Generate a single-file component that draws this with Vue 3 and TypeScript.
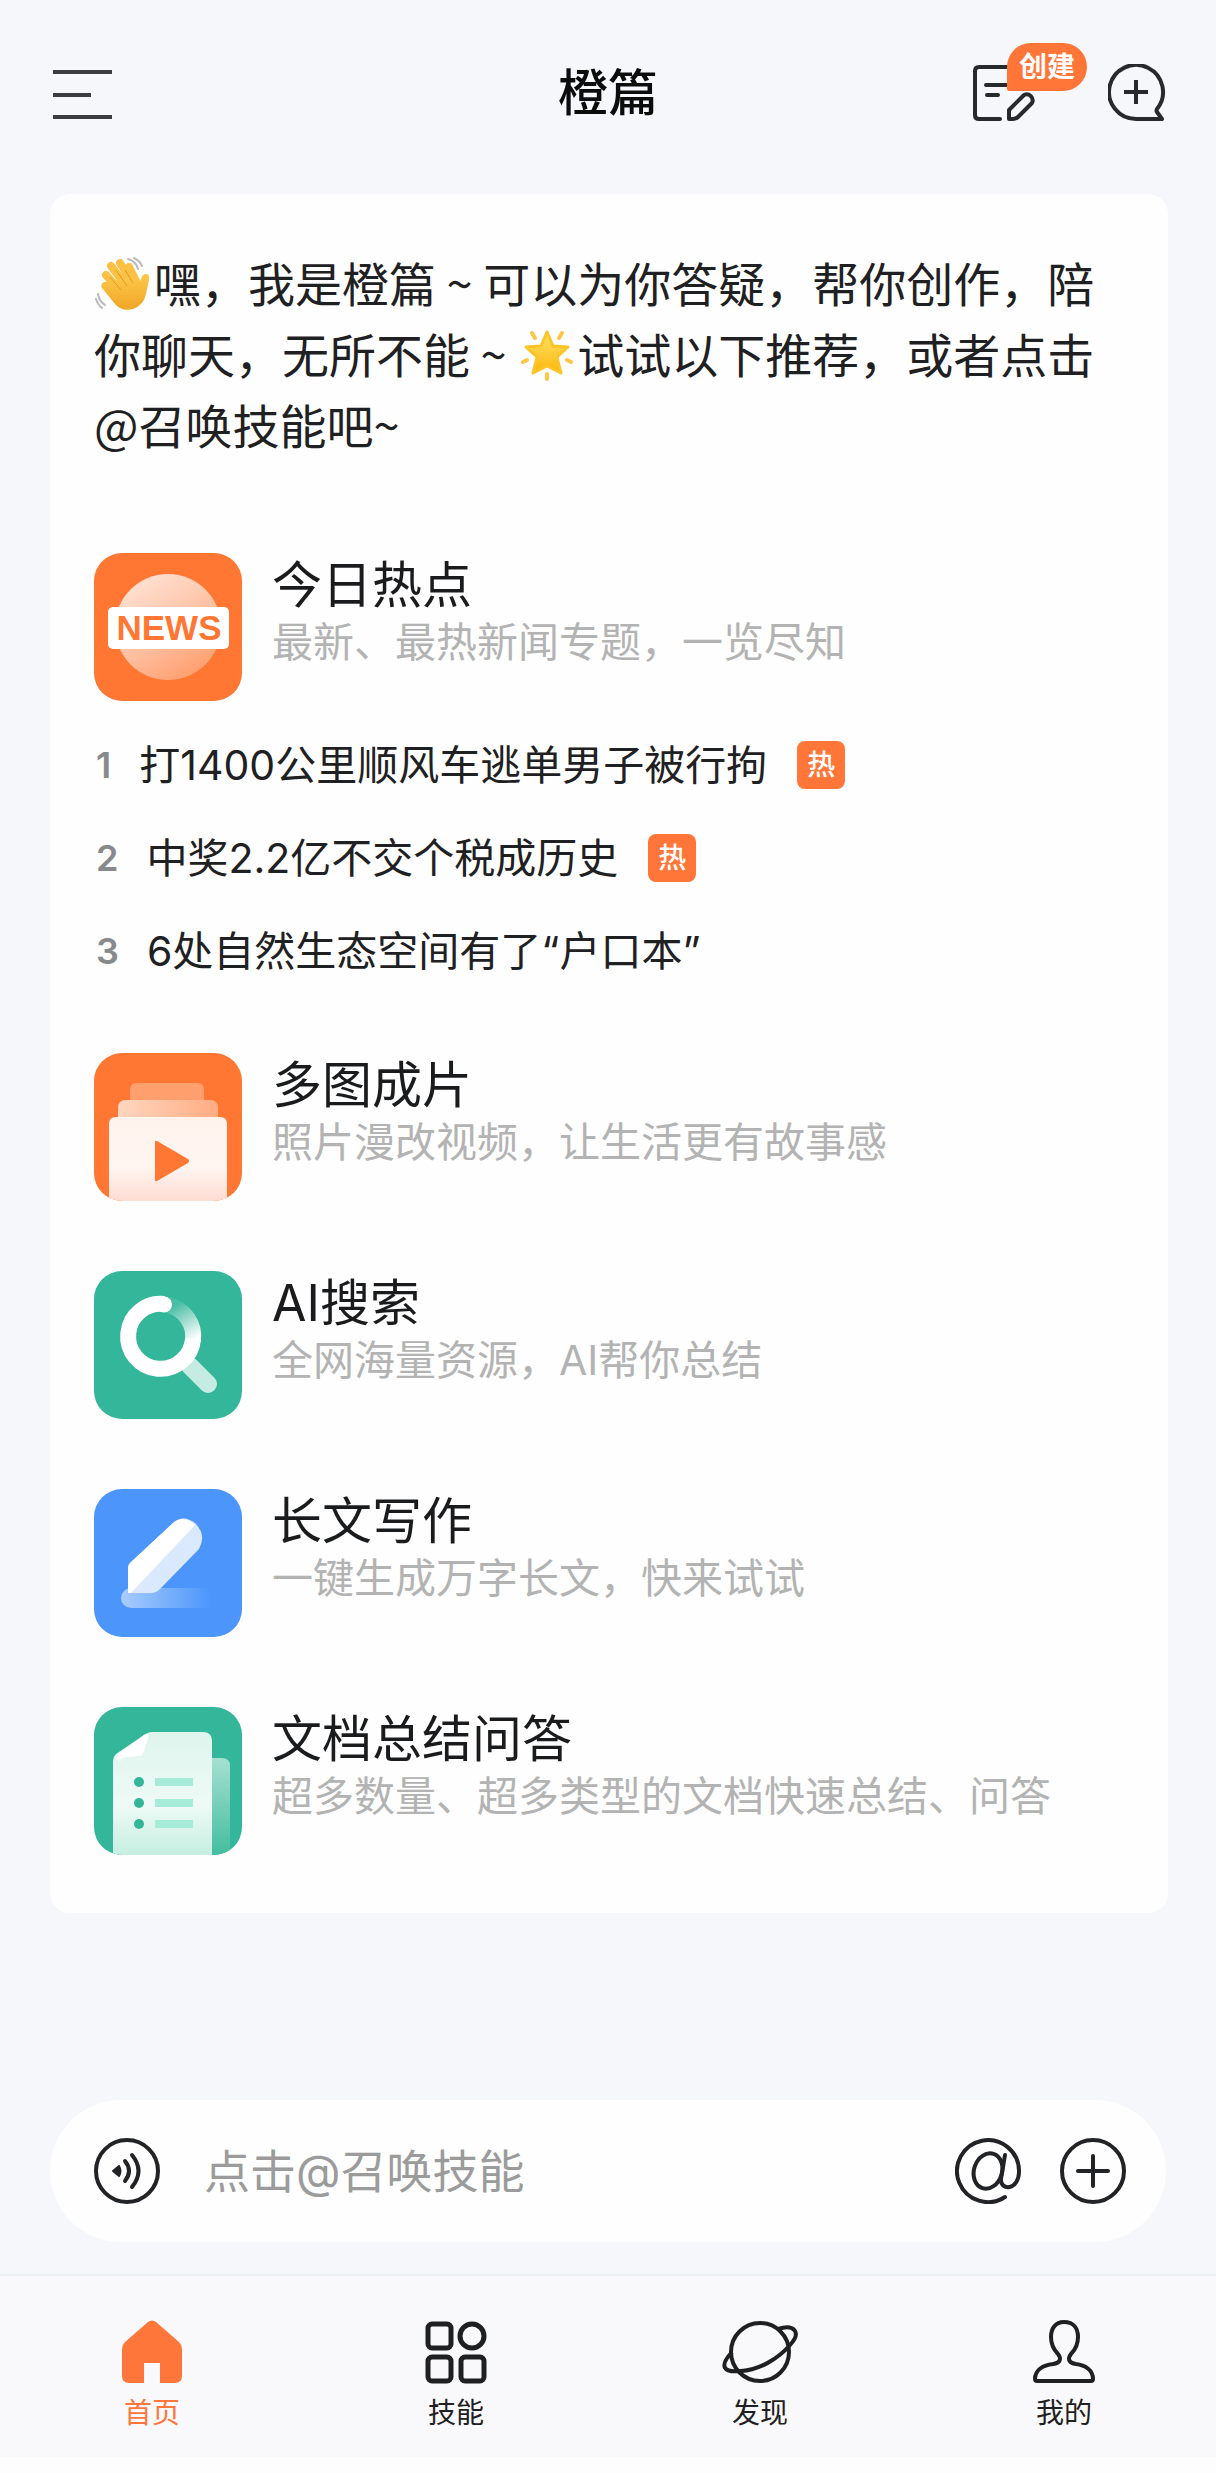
<script setup lang="ts">
import { ref } from 'vue'

interface Feature {
  id: string
  title: string
  desc: string
  color: string
}

interface NewsItem {
  text: string
  hot: boolean
}

interface Tab {
  id: string
  label: string
}

const news: NewsItem[] = [
  { text: '打1400公里顺风车逃单男子被行拘', hot: true },
  { text: '中奖2.2亿不交个税成历史', hot: true },
  { text: '6处自然生态空间有了“户口本”', hot: false },
]

const features: Feature[] = [
  { id: 'news', title: '今日热点', desc: '最新、最热新闻专题，一览尽知', color: '#ff7733' },
  { id: 'video', title: '多图成片', desc: '照片漫改视频，让生活更有故事感', color: '#ff7733' },
  { id: 'search', title: 'AI搜索', desc: '全网海量资源，AI帮你总结', color: '#33b699' },
  { id: 'write', title: '长文写作', desc: '一键生成万字长文，快来试试', color: '#4c96fb' },
  { id: 'doc', title: '文档总结问答', desc: '超多数量、超多类型的文档快速总结、问答', color: '#33b699' },
]

const tabs: Tab[] = [
  { id: 'home', label: '首页' },
  { id: 'skills', label: '技能' },
  { id: 'discover', label: '发现' },
  { id: 'me', label: '我的' },
]

const active = ref('home')
const message = ref('')
</script>

<template>
  <div class="app">
    <header class="topbar">
      <button class="icon-btn" type="button" aria-label="菜单">
        <svg width="62" height="58" viewBox="0 0 62 58" fill="none" stroke="#3c3d40" stroke-width="4">
          <path d="M3 8H62M3 31H41M3 53H62" />
        </svg>
      </button>
      <h1 class="title">橙篇</h1>
      <div class="actions">
        <button class="icon-btn create" type="button" aria-label="创建">
          <svg width="64" height="58" viewBox="0 0 64 58" fill="none" stroke="#28292c" stroke-width="4" stroke-linecap="round" stroke-linejoin="round">
            <path d="M36 3H7Q3 3 3 7V51Q3 55 7 55H28M14 21H36M15 31H26" />
            <path d="M37 55V46L52 31A6 6 0 0 1 60 39L46 53Q44 55 41 55Z" />
          </svg>
          <span class="badge">创建</span>
        </button>
        <button class="icon-btn" type="button" aria-label="新对话">
          <svg width="58" height="58" viewBox="0 0 58 58" fill="none" stroke="#28292c" stroke-width="4" stroke-linejoin="round">
            <path d="M28 55A27 27 0 1 1 49 45Q48 47 49 48L54 55ZM16 28H40M28 16V40" />
          </svg>
        </button>
      </div>
    </header>

    <main class="card">
      <p class="intro">
        <svg class="emoji" viewBox="0 0 58 54" role="img" aria-label="挥手">
          <defs>
            <linearGradient id="hand" x1="0" y1="0" x2="0" y2="1">
              <stop offset="0" stop-color="#fdc94b" />
              <stop offset="1" stop-color="#f0a526" />
            </linearGradient>
          </defs>
          <g stroke="#fbc044" stroke-width="8" stroke-linecap="round">
            <path d="M11 18L26 35M16 9L32 30M25 6L38 27M34 10L43 28" />
          </g>
          <path d="M9 25Q5 27 7 31L20 47Q27 55 38 52Q49 48 51 37L54 23Q55 17 51 17Q47 17 46 22L44 28L36 20L14 25Z" fill="url(#hand)" />
          <path d="M15 20L26 33M21 13L32 29M30 13L38 26" stroke="#e39a22" stroke-width="1" fill="none" />
          <path d="M33 2Q41 4 43 12M39 1Q45 4 47 9M3 37Q4 44 10 48M1 42Q3 48 7 51" stroke="#b9b9b9" stroke-width="2" stroke-linecap="round" fill="none" />
        </svg>嘿，我是橙篇 ~ 可以为你答疑，帮你创作，陪你聊天，无所不能 ~ <svg class="emoji" viewBox="0 0 58 54" role="img" aria-label="星星">
          <defs>
            <linearGradient id="star" x1="0" y1="0" x2="0" y2="1">
              <stop offset="0" stop-color="#ffe36a" />
              <stop offset="1" stop-color="#fbb60e" />
            </linearGradient>
          </defs>
          <path d="M29 4L35 18L50 19L39 29L43 45L29 38L15 45L19 29L8 19L23 18Z" fill="url(#star)" stroke="#fcc427" stroke-width="3" stroke-linejoin="round" />
          <g stroke="#fdc648" stroke-width="4" stroke-linecap="round">
            <path d="M14 5L17 10M44 5L41 10M5 34L9 32M53 34L49 32M29 46V51" />
          </g>
        </svg>试试以下推荐，或者点击@召唤技能吧~
      </p>

      <section v-for="f in features" :key="f.id" class="block">
        <a class="feature" href="#">
          <span class="tile" :style="{ background: f.color }">
            <svg v-if="f.id === 'news'" viewBox="0 0 148 148">
              <defs>
                <linearGradient id="globe" x1="0.2" y1="0" x2="0.8" y2="1">
                  <stop offset="0" stop-color="#ffe3d6" />
                  <stop offset="0.5" stop-color="#ffc3a6" />
                  <stop offset="1" stop-color="#ff9a68" />
                </linearGradient>
              </defs>
              <circle cx="74" cy="74" r="53" fill="url(#globe)" />
              <rect x="14" y="54" width="121" height="42" rx="5" fill="#fff" />
              <text x="75" y="87" text-anchor="middle" class="news-word">NEWS</text>
            </svg>
            <svg v-else-if="f.id === 'video'" viewBox="0 0 148 148">
              <defs>
                <linearGradient id="sheet" x1="0" y1="0" x2="0" y2="1">
                  <stop offset="0" stop-color="#fff3ec" />
                  <stop offset="0.6" stop-color="#fff5f1" />
                  <stop offset="1" stop-color="#ffdcd2" />
                </linearGradient>
                <linearGradient id="sheetMid" x1="0" y1="0" x2="1" y2="0">
                  <stop offset="0" stop-color="#ffd6c0" />
                  <stop offset="1" stop-color="#ffac82" />
                </linearGradient>
              </defs>
              <path d="M36 47V37Q36 30 43 30H103Q110 30 110 37V47Z" fill="#ff9f6e" />
              <path d="M24 66V55Q24 47 32 47H116Q124 47 124 55V66Z" fill="url(#sheetMid)" />
              <path d="M15 148V71Q15 64 22 64H126Q133 64 133 71V148Z" fill="url(#sheet)" />
              <path d="M63 88L94 106Q96 108 94 110L63 128Q61 129 61 127V89Q61 87 63 88Z" fill="#ff7733" />
            </svg>
            <svg v-else-if="f.id === 'search'" viewBox="0 0 148 148" fill="none" stroke-width="16">
              <defs>
                <linearGradient id="arc" x1="78" y1="36" x2="98" y2="70" gradientUnits="userSpaceOnUse">
                  <stop offset="0" stop-color="#fff" stop-opacity="0.1" />
                  <stop offset="1" stop-color="#fff" />
                </linearGradient>
              </defs>
              <path d="M96 95L114 113" stroke="#c6ebe0" stroke-width="18" stroke-linecap="round" />
              <path d="M74 34A32.500 32.500 0 0 1 99 70" stroke="url(#arc)" />
              <path d="M70 33A32.500 32.500 0 1 0 99 68" stroke="#fff" />
              <circle cx="70" cy="33.500" r="8" fill="#fff" stroke="none" />
            </svg>
            <svg v-else-if="f.id === 'write'" viewBox="0 0 148 148">
              <defs>
                <linearGradient id="stroke" x1="0" y1="0" x2="1" y2="0">
                  <stop offset="0" stop-color="#a9ccfd" />
                  <stop offset="1" stop-color="#4c96fb" />
                </linearGradient>
              </defs>
              <path d="M37 99H116V119H37A10 10 0 0 1 37 99Z" fill="url(#stroke)" />
              <path d="M34 104V79Q34 76 36 74L79 34Q89 25 101 34Q113 46 105 60L66 100Q62 104 57 104Z" fill="#dbe9fe" />
              <path d="M34 104V79Q34 76 36 74L79 34Q89 25 101 36L37 104Z" fill="#fff" />
            </svg>
            <svg v-else viewBox="0 0 148 148">
              <defs>
                <linearGradient id="page" x1="0" y1="0" x2="0" y2="1">
                  <stop offset="0" stop-color="#dff5ee" />
                  <stop offset="0.6" stop-color="#eefaf6" />
                  <stop offset="1" stop-color="#c5eee0" />
                </linearGradient>
                <linearGradient id="pageBack" x1="0" y1="0" x2="0" y2="1">
                  <stop offset="0" stop-color="#a5e0d0" />
                  <stop offset="1" stop-color="#44bd9f" />
                </linearGradient>
              </defs>
              <path d="M100 51H128Q136 51 136 59V148H100Z" fill="url(#pageBack)" />
              <path d="M19 148V54Q19 50 22 47L50 28Q54 25 58 25H109Q118 25 118 34V148Z" fill="url(#page)" />
              <path d="M22 49L50 28Q56 25 54 32L49 46Q48 49 44 49L33 50Q27 50 26 55Q22 50 22 49Z" fill="#fff" />
              <g fill="#33b699">
                <circle cx="45" cy="75" r="5" />
                <circle cx="45" cy="96" r="5" />
                <circle cx="45" cy="117" r="5" />
              </g>
              <path d="M61 75H99M61 96H99M61 117H99" stroke="#a6ecd8" stroke-width="8" />
            </svg>
          </span>
          <span class="feature-text">
            <strong>{{ f.title }}</strong>
            <span>{{ f.desc }}</span>
          </span>
        </a>
        <ol v-if="f.id === 'news'" class="news">
          <li v-for="(n, i) in news" :key="n.text">
            <span class="rank">{{ i + 1 }}</span>
            <a href="#">{{ n.text }}</a>
            <span v-if="n.hot" class="hot">热</span>
          </li>
        </ol>
      </section>
    </main>

    <form class="composer" @submit.prevent>
      <button class="icon-btn" type="button" aria-label="语音">
        <svg width="66" height="66" viewBox="0 0 66 66" fill="none" stroke="#222326" stroke-width="4" stroke-linecap="round">
          <circle cx="33" cy="33" r="31" />
          <path d="M31 23Q39 33 31 43M38 17Q51 33 38 49" />
          <path d="M19 33L25 28Q28 33 25 38Z" fill="#222326" stroke="#222326" stroke-width="2" stroke-linejoin="round" />
        </svg>
      </button>
      <input v-model="message" type="text" aria-label="消息" placeholder="点击@召唤技能" />
      <button class="icon-btn" type="button" aria-label="召唤技能">
        <svg width="66" height="66" viewBox="0 0 66 66" fill="none" stroke="#222326" stroke-width="4" stroke-linecap="round">
          <ellipse cx="33" cy="33" rx="14" ry="18" transform="rotate(18 33 33)" />
          <path d="M50 17L46 41C45 53 64 53 64 33A31 31 0 1 0 50 59" />
        </svg>
      </button>
      <button class="icon-btn" type="button" aria-label="添加">
        <svg width="66" height="66" viewBox="0 0 66 66" fill="none" stroke="#222326" stroke-width="4" stroke-linecap="round">
          <circle cx="33" cy="33" r="31" />
          <path d="M18 33H48M33 18V48" />
        </svg>
      </button>
    </form>

    <nav class="tabs">
      <a v-for="t in tabs" :key="t.id" href="#" :class="{ active: active === t.id }" @click.prevent="active = t.id">
        <svg v-if="t.id === 'home'" width="60" height="64" viewBox="0 0 60 64">
          <path d="M26 2Q30 -1 34 2L57 22Q60 25 60 29V56Q60 63 53 63H38V43H22V63H7Q0 63 0 56V29Q0 25 3 22Z" fill="currentColor" />
        </svg>
        <svg v-else-if="t.id === 'skills'" width="62" height="64" viewBox="0 0 62 64" fill="none" stroke="currentColor" stroke-width="5">
          <rect x="3" y="4" width="23" height="24" rx="4" />
          <circle cx="47" cy="16" r="12" />
          <rect x="3" y="37" width="23" height="24" rx="4" />
          <rect x="36" y="37" width="23" height="24" rx="4" />
        </svg>
        <svg v-else-if="t.id === 'discover'" width="78" height="64" viewBox="0 0 78 64" fill="none" stroke="currentColor" stroke-width="4">
          <circle cx="39" cy="32" r="29" />
          <path d="M57 9C73 4 81 12 69 25C57 39 38 50 20 51C2 53 -2 46 11 32" />
        </svg>
        <svg v-else width="63" height="64" viewBox="0 0 63 64" fill="none" stroke="currentColor" stroke-width="4">
          <path d="M31 2C22 2 18 9 18 17C18 25 21 30 25 34C29 39 27 43 20 44C10 45 2 50 2 59Q2 61 4 61H58Q60 61 60 59C60 50 52 45 43 44C36 43 34 39 38 34C42 30 45 25 45 17C45 9 41 2 31 2Z" />
        </svg>
        <span>{{ t.label }}</span>
      </a>
    </nav>
  </div>
</template>

<style>
body {
  margin: 0;
  background: #f6f7fa;
}
</style>

<style scoped>
.app {
  display: flex;
  flex-direction: column;
  min-height: 100vh;
  background: #f6f7fa;
  color: #1f2022;
  font-family: Inter, "Noto Sans CJK SC", sans-serif;
}

a {
  color: inherit;
  text-decoration: none;
}

svg {
  display: block;
}

.icon-btn {
  flex: none;
  padding: 0;
  border: 0;
  background: none;
  font: inherit;
}

.topbar {
  display: grid;
  grid-template-columns: 1fr auto 1fr;
  align-items: center;
  height: 185px;
  padding: 0 50px;
}

.topbar > .icon-btn {
  justify-self: start;
}

.title {
  margin: 0;
  color: #0c0c0d;
  font-size: 50px;
  font-weight: 500;
  line-height: 72px;
}

.actions {
  display: flex;
  justify-content: flex-end;
  gap: 72px;
}

.create {
  position: relative;
}

.badge {
  position: absolute;
  top: -21px;
  left: 35px;
  width: 80px;
  border-radius: 24px 24px 24px 2px;
  background: #ff7638;
  color: #fff;
  font-size: 28px;
  font-weight: 700;
  line-height: 48px;
  text-align: center;
}

.card {
  margin: 9px 48px 0 50px;
  padding: 52px 46px 58px 44px;
  border-radius: 20px;
  background: #fefefe;
}

.intro {
  margin: 0 0 94px;
  font-family: "Noto Sans CJK SC", sans-serif;
  font-size: 47px;
  line-height: 71px;
}

.emoji {
  display: inline-block;
  width: 60px;
  height: 54px;
  vertical-align: -9px;
}

.block + .block {
  margin-top: 70px;
}

.block:nth-of-type(2) {
  margin-top: 56px;
}

.feature {
  display: flex;
  gap: 30px;
}

.tile {
  flex: none;
  width: 148px;
  height: 148px;
  overflow: hidden;
  border-radius: 28px;
}

.news-word {
  fill: #ff7733;
  font-family: "Liberation Sans", sans-serif;
  font-size: 35px;
  font-weight: 700;
}

.feature-text {
  display: flex;
  flex-direction: column;
  color: #b3b3b3;
  font-size: 41px;
  line-height: 50px;
}

.feature-text strong {
  color: #1a1b1d;
  font-size: 50px;
  font-weight: 400;
  line-height: 64px;
}

.news {
  margin: 17px 0 0;
  padding: 0 0 0 2px;
  list-style: none;
}

.news li {
  display: flex;
  align-items: center;
  height: 93px;
  font-size: 41px;
  line-height: 48px;
}

.rank {
  margin-right: 28px;
  color: #88898b;
  font-size: 36px;
  font-weight: 600;
}

.hot {
  width: 48px;
  margin-left: 30px;
  border-radius: 8px;
  background: #ff7638;
  color: #fff;
  font-size: 28px;
  font-weight: 500;
  text-align: center;
}

.composer {
  display: flex;
  align-items: center;
  height: 142px;
  margin: auto 50px 32px;
  padding: 0 40px 0 44px;
  border-radius: 71px;
  background: #fefefe;
}

.composer input {
  flex: 1;
  min-width: 0;
  padding: 0 44px;
  border: 0;
  outline: 0;
  background: none;
  color: #1f2022;
  font: inherit;
  font-size: 46px;
}

.composer input::placeholder {
  color: #9b9b9b;
  opacity: 1;
}

.composer .icon-btn + .icon-btn {
  margin-left: 39px;
}

.tabs {
  display: flex;
  height: 181px;
  border-top: 2px solid #f0f1f3;
  border-bottom: 16px solid #fdfdfe;
  background: #f9f9fb;
}

.tabs a {
  display: flex;
  flex: 1;
  flex-direction: column;
  align-items: center;
  gap: 9px;
  padding-top: 44px;
  font-size: 28px;
  line-height: 40px;
}

.tabs .active {
  color: #ff763b;
}
</style>
